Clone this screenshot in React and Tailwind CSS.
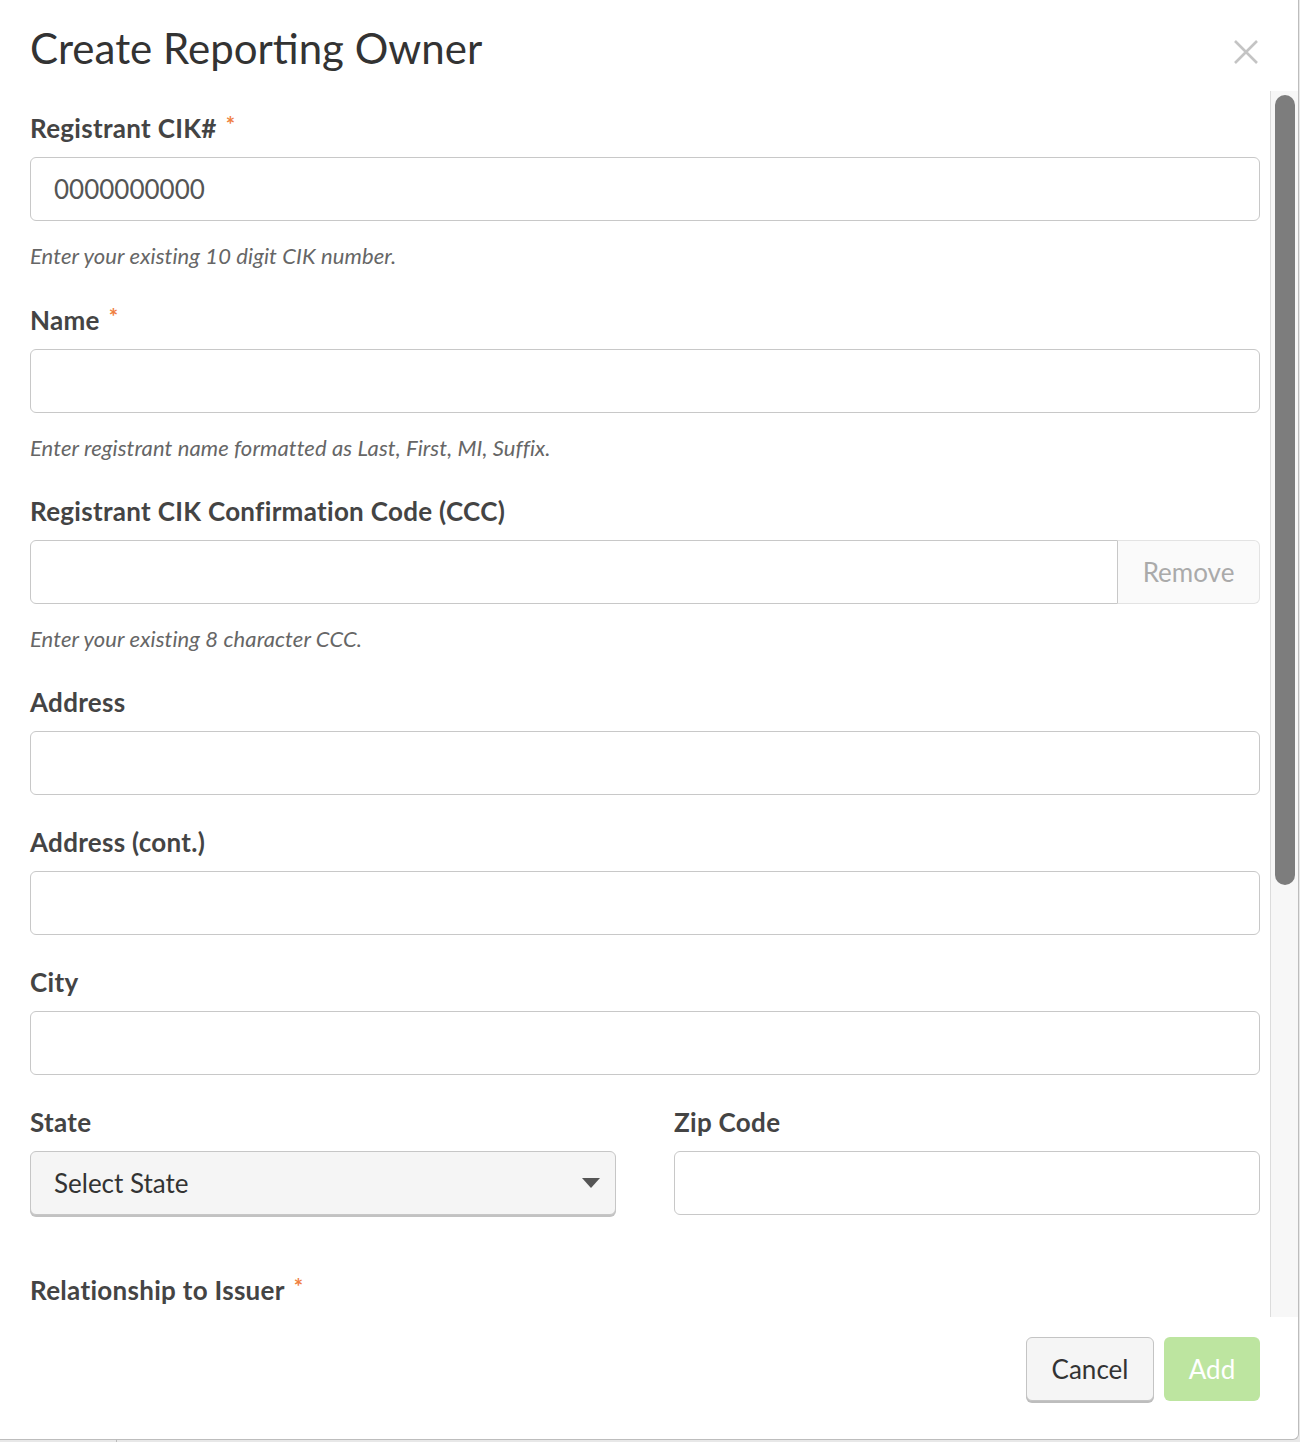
import React from "react";

const font = { fontFamily: "Lato, 'Open Sans', sans-serif" };

function Star() {
  return (
    <span className="ml-[9px] align-top text-[22px] leading-none text-[#f08040] relative top-[3px]">*</span>
  );
}

function Label({ children, required }) {
  return (
    <div className="text-[26px] leading-[34px] font-bold tracking-[0.3px] text-[#444] mb-[12px]">
      {children}
      {required && <Star />}
    </div>
  );
}

function Input({ value }) {
  return (
    <div className="h-[64px] w-full rounded-[6px] border border-[#c8c8c8] bg-white flex items-center px-[23px] text-[26px] text-[#555]">
      {value}
    </div>
  );
}

function Help({ children }) {
  return <div className="mt-[19px] text-[22px] leading-[32px] italic tracking-[0.1px] text-[#666]">{children}</div>;
}

export default function App() {
  return (
    <div className="w-[1300px] h-[1442px] bg-[#e8e8e8] relative overflow-hidden" style={font}>
      <div className="absolute left-[116px] top-[1439px] w-px h-[3px] bg-[#bbb]" />
      <div className="w-[1299px] h-[1440px] bg-white border-r border-b border-[#bdbdbd] rounded-br-[6px] flex flex-col">
        {/* header */}
        <div className="h-[91px] flex items-start justify-between pl-[30px] pr-[40px] pt-[22px] shrink-0">
          <div className="text-[42px] leading-[52px] text-[#333]">Create Reporting Owner</div>
          <svg width="24" height="24" viewBox="0 0 24 24" className="mt-[18px]">
            <path d="M1 1 L23 23 M23 1 L1 23" stroke="#c4c4c4" strokeWidth="2.6" />
          </svg>
        </div>
        {/* body */}
        <div className="flex h-[1226px] shrink-0">
          <div className="flex-1 pl-[30px] pr-[10px] pt-[20px] overflow-hidden">
            <div className="mb-[31px]">
              <Label required>Registrant CIK#</Label>
              <Input value="0000000000" />
              <Help>Enter your existing 10 digit CIK number.</Help>
            </div>
            <div className="mb-[30px]">
              <Label required>Name</Label>
              <Input />
              <Help>Enter registrant name formatted as Last, First, MI, Suffix.</Help>
            </div>
            <div className="mb-[30px]">
              <Label>Registrant CIK Confirmation Code (CCC)</Label>
              <div className="flex h-[64px]">
                <div className="flex-1 rounded-l-[6px] border border-[#c8c8c8] bg-white" />
                <div className="w-[142px] rounded-r-[6px] border border-l-0 border-[#e3e3e3] bg-[#fafafa] flex items-center justify-center text-[26px] text-[#aaa]">
                  Remove
                </div>
              </div>
              <Help>Enter your existing 8 character CCC.</Help>
            </div>
            <div className="mb-[30px]">
              <Label>Address</Label>
              <Input />
            </div>
            <div className="mb-[30px]">
              <Label>Address (cont.)</Label>
              <Input />
            </div>
            <div className="mb-[30px]">
              <Label>City</Label>
              <Input />
            </div>
            <div className="grid grid-cols-2 gap-x-[58px] mb-[58px]">
              <div>
                <Label>State</Label>
                <div className="h-[64px] rounded-[6px] border border-[#c6c6c6] bg-[#f5f5f5] shadow-[0_2px_0_#c2c2c2] flex items-center justify-between pl-[23px] pr-[14px] text-[26px] text-[#333]">
                  <span>Select State</span>
                  <svg width="20" height="12" viewBox="0 0 20 12">
                    <path d="M1 1 L19 1 L10 11 Z" fill="#555" />
                  </svg>
                </div>
              </div>
              <div>
                <Label>Zip Code</Label>
                <Input />
              </div>
            </div>
            <div>
              <Label required>Relationship to Issuer</Label>
            </div>
          </div>
          {/* scrollbar */}
          <div className="w-[28px] border-l border-[#dcdcdc] bg-[#f7f7f7] pl-[4px] pr-[3px] pt-[4px]">
            <div className="w-[20px] h-[790px] rounded-full bg-[#7d7d7d]" />
          </div>
        </div>
        {/* footer */}
        <div className="flex-1 flex justify-end items-start gap-[10px] pt-[20px] pr-[38px]">
          <button className="h-[64px] w-[128px] rounded-[6px] border border-[#c4c4c4] bg-[#f5f5f5] shadow-[0_2px_0_#bdbdbd] text-[26px] text-[#333]">
            Cancel
          </button>
          <button className="h-[64px] w-[96px] rounded-[6px] bg-[#bde5a0] text-[26px] text-white">
            Add
          </button>
        </div>
      </div>
    </div>
  );
}
